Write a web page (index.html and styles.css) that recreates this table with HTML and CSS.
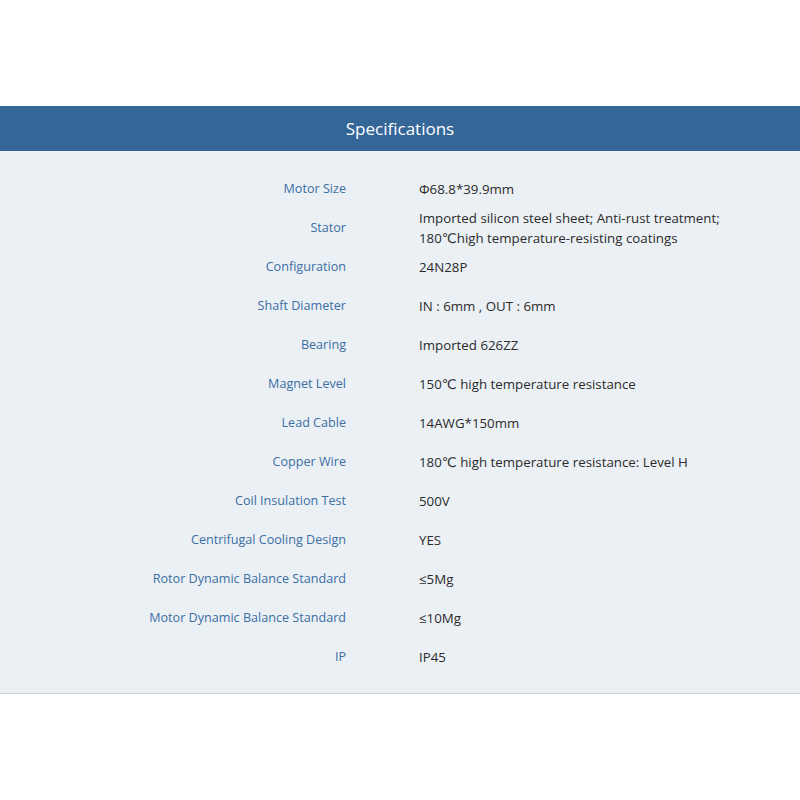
FILE: index.html
```html
<!DOCTYPE html>
<html>
<head>
<meta charset="utf-8">
<link rel="stylesheet" href="styles.css">
</head>
<body>
<div class="page">
  <div class="header">Specifications</div>
  <div class="panel">
    <div class="specs">
      <div class="label">Motor Size</div><div class="value">Φ68.8*39.9mm</div>
      <div class="label">Stator</div><div class="value">Imported silicon steel sheet; Anti-rust treatment;<br>180℃high temperature-resisting coatings</div>
      <div class="label">Configuration</div><div class="value">24N28P</div>
      <div class="label">Shaft Diameter</div><div class="value">IN : 6mm , OUT : 6mm</div>
      <div class="label">Bearing</div><div class="value">Imported 626ZZ</div>
      <div class="label">Magnet Level</div><div class="value">150℃ high temperature resistance</div>
      <div class="label">Lead Cable</div><div class="value">14AWG*150mm</div>
      <div class="label">Copper Wire</div><div class="value">180℃ high temperature resistance: Level H</div>
      <div class="label">Coil Insulation Test</div><div class="value">500V</div>
      <div class="label">Centrifugal Cooling Design</div><div class="value">YES</div>
      <div class="label">Rotor Dynamic Balance Standard</div><div class="value">≤5Mg</div>
      <div class="label">Motor Dynamic Balance Standard</div><div class="value">≤10Mg</div>
      <div class="label">IP</div><div class="value">IP45</div>
    </div>
  </div>
</div>
</body>
</html>
```
FILE: styles.css
```css
html, body {
  margin: 0;
  padding: 0;
  background: #ffffff;
}
.page {
  padding-top: 106px;
  font-family: "Open Sans", "DejaVu Sans", "Noto Sans CJK SC", sans-serif;
}
.header {
  height: 45px;
  background: #346698;
  color: #ffffff;
  font-size: 17px;
  line-height: 45px;
  text-align: center;
}
.panel {
  background: #ebf0f5;
  padding: 18px 0 17px;
  border-bottom: 1px solid #cdd4da;
}
.specs {
  display: grid;
  grid-template-columns: 346px 1fr;
  grid-auto-rows: 39px;
  column-gap: 73px;
  align-items: center;
  line-height: 20px;
}
.label {
  text-align: right;
  color: #3b6ea3;
  font-size: 12.6px;
}
.value {
  color: #2b2b2b;
  font-size: 13.3px;
}
```
